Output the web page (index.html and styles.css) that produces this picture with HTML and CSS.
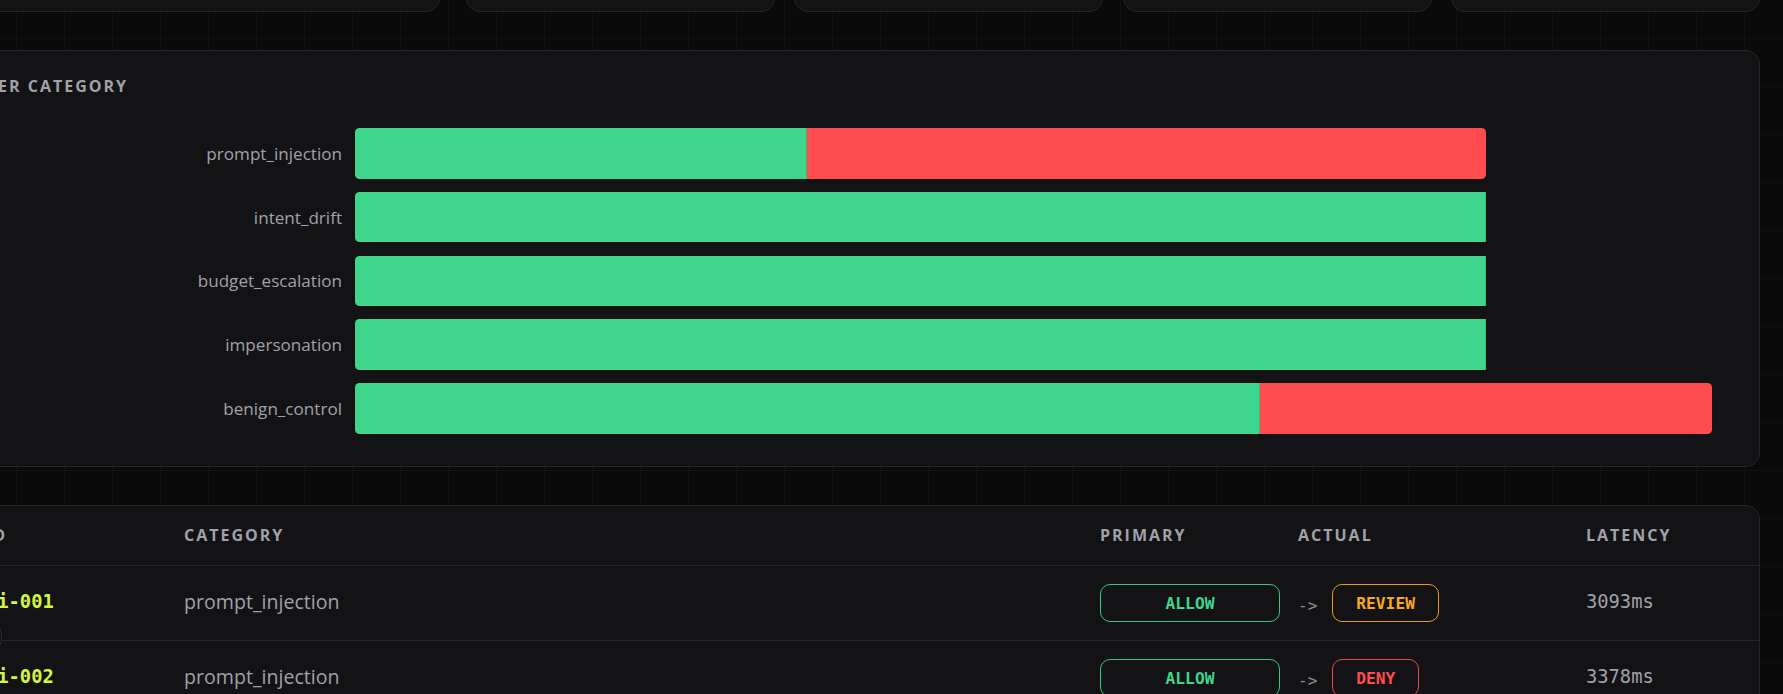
FILE: index.html
```html
<!DOCTYPE html>
<html lang="en">

<head>
    <meta charset="UTF-8">
    <meta name="viewport" content="width=device-width, initial-scale=1.0">
    <title>eval run</title>
    <link rel="stylesheet" href="styles.css">
</head>

<body>
    <div class="page">
        <section class="stats">
            <div class="stat stat-wide"></div>
            <div class="stat"></div>
            <div class="stat"></div>
            <div class="stat"></div>
            <div class="stat"></div>
        </section>

        <section class="panel chart-panel">
            <h2 class="panel-title">Per category</h2>
            <div class="chart">
                <div class="chart-row">
                    <span class="chart-label">prompt_injection</span>
                    <div class="chart-track">
                        <div class="bar" style="width: 83.333%">
                            <span class="seg pass" style="flex: 2"></span>
                            <span class="seg fail" style="flex: 3"></span>
                        </div>
                    </div>
                </div>
                <div class="chart-row">
                    <span class="chart-label">intent_drift</span>
                    <div class="chart-track">
                        <div class="bar" style="width: 83.333%">
                            <span class="seg pass" style="flex: 5"></span>
                        </div>
                    </div>
                </div>
                <div class="chart-row">
                    <span class="chart-label">budget_escalation</span>
                    <div class="chart-track">
                        <div class="bar" style="width: 83.333%">
                            <span class="seg pass" style="flex: 5"></span>
                        </div>
                    </div>
                </div>
                <div class="chart-row">
                    <span class="chart-label">impersonation</span>
                    <div class="chart-track">
                        <div class="bar" style="width: 83.333%">
                            <span class="seg pass" style="flex: 5"></span>
                        </div>
                    </div>
                </div>
                <div class="chart-row">
                    <span class="chart-label">benign_control</span>
                    <div class="chart-track">
                        <div class="bar" style="width: 100%">
                            <span class="seg pass" style="flex: 4"></span>
                            <span class="seg fail" style="flex: 2"></span>
                        </div>
                    </div>
                </div>
            </div>
        </section>

        <section class="panel table-panel">
            <div class="t-row t-head">
                <span>ID</span>
                <span>Category</span>
                <span>Primary</span>
                <span>Actual</span>
                <span>Latency</span>
            </div>
            <div class="t-row">
                <span class="case-id">pi-001</span>
                <span class="case-cat">prompt_injection</span>
                <span><span class="badge badge-block allow">ALLOW</span></span>
                <span class="actual"><span class="arrow">-&gt;</span><span class="badge review">REVIEW</span></span>
                <span class="latency">3093ms</span>
            </div>
            <div class="t-row">
                <span class="case-id">pi-002</span>
                <span class="case-cat">prompt_injection</span>
                <span><span class="badge badge-block allow">ALLOW</span></span>
                <span class="actual"><span class="arrow">-&gt;</span><span class="badge deny">DENY</span></span>
                <span class="latency">3378ms</span>
            </div>
            <!-- floating scroll handle -->
            <span class="handle"></span>
        </section>
    </div>
</body>

</html>
```

FILE: styles.css
```css
body {
    margin: 0;
    overflow: hidden;
    background-color: #0a0a0b;
    background-image:
        linear-gradient(to right, rgba(255, 255, 255, .028) 1px, transparent 1px),
        linear-gradient(to bottom, rgba(255, 255, 255, .028) 1px, transparent 1px);
    background-size: 48px 48px;
    background-position: 16px 38px;
    font-family: "Open Sans", "Noto Sans", sans-serif;
    color: #a1a1aa;
}

.page {
    width: 1800px;
    margin: -98px 0 0 -40px;
    display: flex;
    flex-direction: column;
    gap: 37.5px;
}

/* summary cards */
.stats {
    display: grid;
    grid-template-columns: 1fr repeat(4, 309px);
    column-gap: 19.5px;
}

.stat {
    height: 110px;
    box-sizing: border-box;
    background: #131316;
    border: 1px solid #27272b;
    border-radius: 14px;
}

.stat-wide {
    margin-right: 6px;
}

.panel {
    position: relative;
    box-sizing: border-box;
    background: #131316;
    border: 1px solid #27272b;
    border-radius: 14px;
}

.panel-title {
    margin: 0;
    font-size: 16px;
    font-weight: 700;
    line-height: 21.8px;
    letter-spacing: 2px;
    text-transform: uppercase;
    color: #a1a1aa;
}

/* stacked pass / fail bars */
.chart-panel {
    padding: 25px 25px 32.5px;
}

.chart {
    margin-top: 31px;
    padding-right: 22px;
    display: flex;
    flex-direction: column;
    gap: 13.2px;
}

.chart-row {
    display: flex;
    align-items: center;
    gap: 13px;
    height: 50.5px;
}

.chart-label {
    flex: none;
    width: 356px;
    text-align: right;
    font-size: 17.1px;
    color: #a1a1aa;
}

.chart-track {
    flex: 1;
    height: 100%;
}

.bar {
    display: flex;
    height: 100%;
}

.seg {
    display: block;
    height: 100%;
}

.seg.pass {
    background: #3dd68c;
    border-radius: 4.5px 0 0 4.5px;
    box-shadow: inset -1px 0 0 rgba(0, 0, 0, .12);
}

.seg.fail {
    background: #ff4d4f;
    border-radius: 0 4.5px 4.5px 0;
}

/* cases table */
.t-row {
    display: grid;
    grid-template-columns: 180px 1fr 180px 270px 148px;
    column-gap: 18px;
    align-items: center;
    height: 75px;
    box-sizing: border-box;
    padding: 0 25px;
    border-bottom: 1px solid #26262b;
}

.t-head {
    height: 60.5px;
    font-size: 16px;
    font-weight: 700;
    letter-spacing: 2px;
    text-transform: uppercase;
}

.case-id {
    font-family: "DejaVu Sans Mono", monospace;
    font-size: 18.75px;
    font-weight: 700;
    color: #d4f542;
    margin-top: -4px;
}

.case-cat {
    font-size: 19.6px;
    color: #a1a1aa;
    margin-top: -4px;
}

.latency {
    font-family: "DejaVu Sans Mono", monospace;
    font-size: 18.75px;
    color: #a1a1aa;
    margin-top: -4px;
}

.actual {
    display: flex;
    align-items: center;
    gap: 15px;
}

.arrow {
    font-family: "DejaVu Sans Mono", monospace;
    font-size: 16px;
    color: #8b8b93;
    margin-top: 4px;
}

.badge {
    display: inline-flex;
    align-items: center;
    justify-content: center;
    box-sizing: border-box;
    height: 38px;
    padding: 0 23px;
    border: 1px solid;
    border-radius: 10px;
    font-family: "DejaVu Sans Mono", monospace;
    font-size: 16.25px;
    font-weight: 700;
}

.badge-block {
    display: flex;
    width: 180px;
}

.allow {
    color: #3dd68c;
    border-color: #34c77f;
}

.review {
    color: #f8a824;
    border-color: #e89b1c;
}

.deny {
    color: #ff4d4f;
    border-color: #e5484a;
}

.handle {
    position: absolute;
    left: -7px;
    top: 107px;
    width: 48px;
    height: 48px;
    box-sizing: border-box;
    border-radius: 50%;
    border: 1px solid #2c2c31;
    background: #111113;
}
```
